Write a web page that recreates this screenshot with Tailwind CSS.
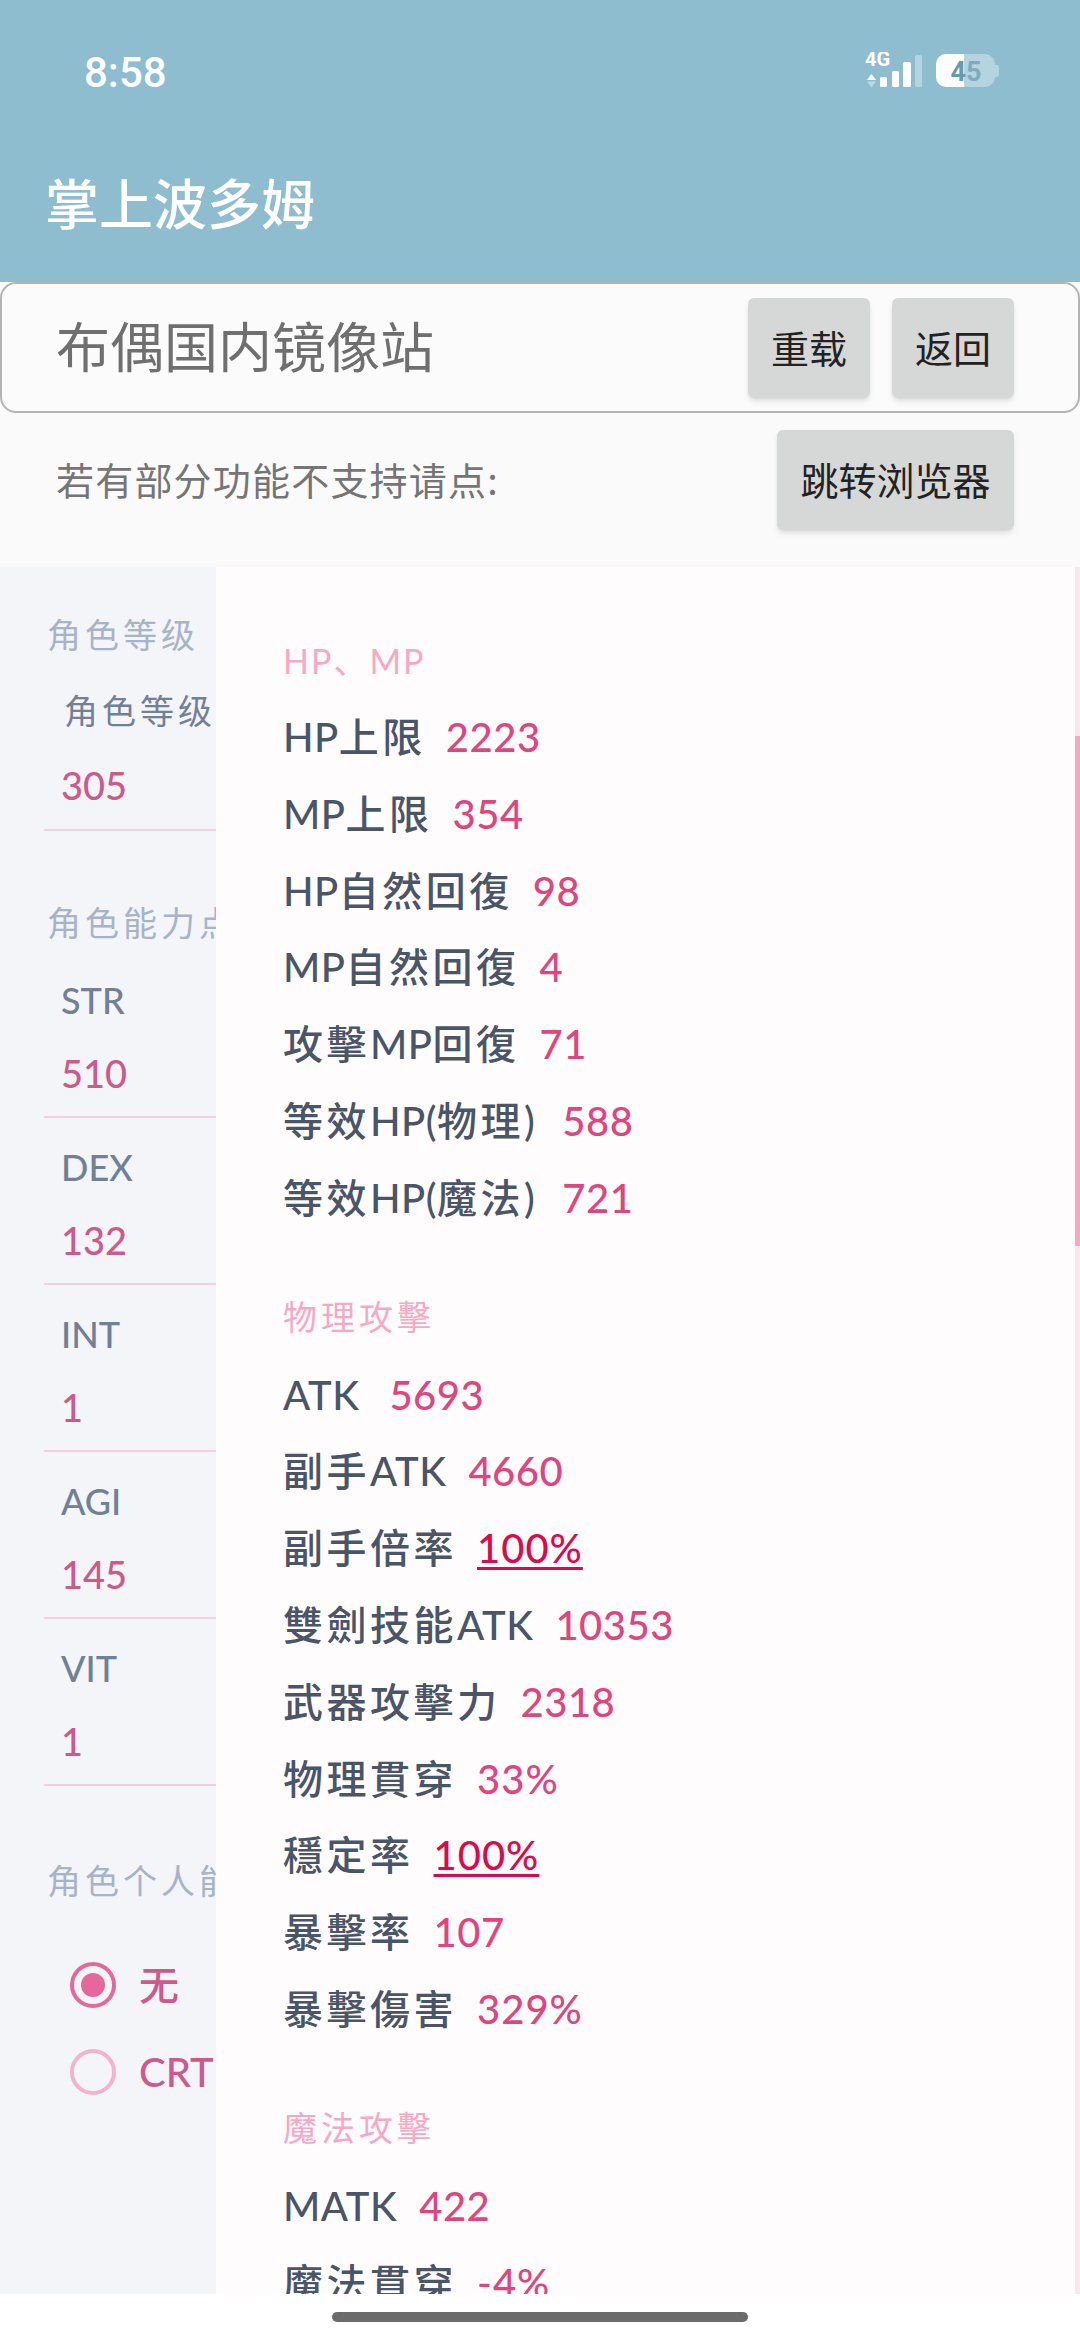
<!DOCTYPE html>
<html lang="zh">
<head>
  <meta charset="UTF-8">
  <meta name="viewport" content="width=device-width, initial-scale=1.0">
  <title>掌上波多姆</title>
  <script src="https://cdn.jsdelivr.net/npm/@tailwindcss/browser@4"></script>
</head>
<body class="w-[1080px] h-[2339px] overflow-hidden bg-white font-['Lato','Noto_Sans_CJK_SC',sans-serif]">
  <!-- App bar -->
  <header class="h-[282px] bg-[#8dbdcf] text-white">
    <div class="h-[144px] flex items-center justify-between pl-[84px] pr-[80px]">
      <span class="font-['Roboto',sans-serif] font-medium text-[42px]">8:58</span>
      <svg width="135" height="40" viewBox="0 0 135 40">
        <text x="0" y="14" font-family="Roboto" font-weight="700" font-size="20" fill="#fff">4G</text>
        <path d="M2 28l4.500-6 4.500 6z" fill="#fff"/>
        <path d="M2 29.500h9l-4.500 6z" fill="#fff" opacity=".4"/>
        <rect x="15" y="25" width="7" height="10" rx="1.500" fill="#fff"/>
        <rect x="27" y="19" width="7" height="16" rx="1.500" fill="#fff"/>
        <rect x="38" y="10" width="8" height="25" rx="1.500" fill="#fff"/>
        <rect x="50" y="3" width="7" height="32" rx="1.500" fill="#fff" opacity=".35"/>
        <rect x="71" y="2" width="59" height="33" rx="10" fill="#fff" opacity=".35"/>
        <path d="M81 2h18v33H81a10 10 0 0 1-10-10V12A10 10 0 0 1 81 2z" fill="#fbfdfe"/>
        <path d="M130 13h2a2 2 0 0 1 2 2v8a2 2 0 0 1-2 2h-2z" fill="#fff" opacity=".35"/>
        <text x="101" y="29" text-anchor="middle" font-family="Roboto" font-weight="700" font-size="27"><tspan fill="#6a98ae">4</tspan><tspan fill="#7fabbe">5</tspan></text>
      </svg>
    </div>
    <h1 class="h-[120px] leading-[116px] pl-[45px] text-[54px] font-medium font-['Noto_Sans_CJK_SC',sans-serif]">掌上波多姆</h1>
  </header>

  <!-- Mirror switcher -->
  <section class="h-[285px] bg-[#fafafa] font-['Noto_Sans_CJK_SC',sans-serif]">
    <div class="h-[131px] flex items-center border-2 border-[#b4b4b4] rounded-2xl pl-[54px] pr-[64px] bg-[#fbfbfb]">
      <span class="flex-1 pb-[7px] text-[54px] text-[#6f6f6f]">布偶国内镜像站</span>
      <button class="w-[122px] h-[100px] pb-[3px] rounded-md bg-[#d6d7d7] shadow-md text-[38px] text-[#222]">重载</button>
      <button class="w-[122px] h-[100px] pb-[3px] ml-[22px] rounded-md bg-[#d6d7d7] shadow-md text-[38px] text-[#222]">返回</button>
    </div>
    <div class="h-[132px] flex items-center pl-[56px] pr-[66px] mt-[1px]">
      <span class="flex-1 pb-[3px] text-[38px] tracking-[1.200px] text-[#757575]">若有部分功能不支持请点:</span>
      <button class="w-[237px] h-[100px] pb-[3px] rounded-md bg-[#d6d7d7] shadow-md text-[38px] text-[#222]">跳转浏览器</button>
    </div>
  </section>

  <main class="h-[1727px] flex overflow-hidden">
    <!-- Character form, mostly covered by the drawer -->
    <div class="w-[216px] shrink-0 bg-[#f3f5f9] pt-[43px] whitespace-nowrap overflow-hidden">
      <h2 class="h-[50px] leading-[50px] pl-[47px] text-[34px] tracking-[4px] font-normal text-[#a6b3c8]">角色等级</h2>
      <div class="ml-[44px] pt-[15px] h-[171px] border-b-2 border-[#f6cfdd]">
        <div class="h-[73px] leading-[72px] pl-[20px] text-[34px] tracking-[4px] text-[#718096]">角色等级</div>
        <div class="h-[74px] leading-[74px] pl-[17px] text-[38px] font-medium text-[#cd5a8a]">305</div>
      </div>

      <h2 class="mt-[67px] mb-[3px] h-[50px] leading-[50px] pl-[47px] text-[34px] tracking-[4px] font-normal text-[#a6b3c8]">角色能力点</h2>
      <div class="ml-[44px] pt-[13px] h-[167px] border-b-2 border-[#f6cfdd]">
        <div class="h-[72px] leading-[72px] pl-[17px] text-[36px] font-medium text-[#718096]">STR</div>
        <div class="h-[74px] leading-[74px] pl-[17px] text-[38px] font-medium text-[#cd5a8a]">510</div>
      </div>
      <div class="ml-[44px] pt-[13px] h-[167px] border-b-2 border-[#f6cfdd]">
        <div class="h-[72px] leading-[72px] pl-[17px] text-[36px] font-medium text-[#718096]">DEX</div>
        <div class="h-[74px] leading-[74px] pl-[17px] text-[38px] font-medium text-[#cd5a8a]">132</div>
      </div>
      <div class="ml-[44px] pt-[13px] h-[167px] border-b-2 border-[#f6cfdd]">
        <div class="h-[72px] leading-[72px] pl-[17px] text-[36px] font-medium text-[#718096]">INT</div>
        <div class="h-[74px] leading-[74px] pl-[17px] text-[38px] font-medium text-[#cd5a8a]">1</div>
      </div>
      <div class="ml-[44px] pt-[13px] h-[167px] border-b-2 border-[#f6cfdd]">
        <div class="h-[72px] leading-[72px] pl-[17px] text-[36px] font-medium text-[#718096]">AGI</div>
        <div class="h-[74px] leading-[74px] pl-[17px] text-[38px] font-medium text-[#cd5a8a]">145</div>
      </div>
      <div class="ml-[44px] pt-[13px] h-[167px] border-b-2 border-[#f6cfdd]">
        <div class="h-[72px] leading-[72px] pl-[17px] text-[36px] font-medium text-[#718096]">VIT</div>
        <div class="h-[74px] leading-[74px] pl-[17px] text-[38px] font-medium text-[#cd5a8a]">1</div>
      </div>

      <h2 class="mt-[70px] h-[50px] leading-[50px] pl-[47px] text-[34px] tracking-[4px] font-normal text-[#a6b3c8]">角色个人能力</h2>
      <div class="mt-[35px] pl-[70px]">
        <div class="h-[87px] flex items-center">
          <span class="w-[46px] h-[46px] rounded-full border-[4px] border-[#e5679b] flex items-center justify-center"><span class="w-[24px] h-[24px] rounded-full bg-[#e5679b]"></span></span>
          <span class="ml-[23px] text-[40px] font-medium text-[#cd5a8a]">无</span>
        </div>
        <div class="h-[87px] flex items-center">
          <span class="w-[46px] h-[46px] rounded-full border-[4px] border-[#f4b3cc]"></span>
          <span class="ml-[23px] text-[40px] font-medium text-[#cd5a8a]">CRT</span>
        </div>
      </div>
    </div>

    <!-- Stats drawer -->
    <div class="relative flex-1 bg-[#fffcfd] pt-[55px] pl-[67px] overflow-hidden whitespace-nowrap text-[40px] tracking-[3.500px] font-medium text-[#4a5568]">
      <h3 class="h-[77px] leading-[77px] text-[34px] tracking-[2px] font-normal text-[#f9a8c4]">HP、MP</h3>
      <div class="h-[76.8px] leading-[76.8px]"><span class="tracking-[0.500px]">HP</span>上限<span class="ml-[20px] tracking-[0.500px] text-[#e0457d]">2223</span></div>
      <div class="h-[76.8px] leading-[76.8px]"><span class="tracking-[0.500px]">MP</span>上限<span class="ml-[20px] tracking-[0.500px] text-[#e0457d]">354</span></div>
      <div class="h-[76.8px] leading-[76.8px]"><span class="tracking-[0.500px]">HP</span>自然回復<span class="ml-[20px] tracking-[0.500px] text-[#e0457d]">98</span></div>
      <div class="h-[76.8px] leading-[76.8px]"><span class="tracking-[0.500px]">MP</span>自然回復<span class="ml-[20px] tracking-[0.500px] text-[#e0457d]">4</span></div>
      <div class="h-[76.8px] leading-[76.8px]">攻擊<span class="tracking-[0.500px]">MP</span>回復<span class="ml-[20px] tracking-[0.500px] text-[#e0457d]">71</span></div>
      <div class="h-[76.8px] leading-[76.8px]">等效<span class="tracking-[0.500px]">HP(</span>物理)<span class="ml-[24px] tracking-[0.500px] text-[#e0457d]">588</span></div>
      <div class="h-[76.8px] leading-[76.8px]">等效<span class="tracking-[0.500px]">HP(</span>魔法)<span class="ml-[24px] tracking-[0.500px] text-[#e0457d]">721</span></div>

      <h3 class="mt-[40px] h-[80px] leading-[80px] text-[34px] tracking-[4px] font-normal text-[#f9a8c4]">物理攻擊</h3>
      <div class="h-[76.8px] leading-[76.8px]"><span class="tracking-[0.500px]">ATK</span><span class="ml-[30px] tracking-[0.500px] text-[#e0457d]">5693</span></div>
      <div class="h-[76.8px] leading-[76.8px]">副手<span class="tracking-[0.500px]">ATK</span><span class="ml-[22px] tracking-[0.500px] text-[#e0457d]">4660</span></div>
      <div class="h-[76.8px] leading-[76.8px]">副手倍率<span class="ml-[20px] tracking-[1px] text-[#db0a4b] underline decoration-[3px] underline-offset-4">100%</span></div>
      <div class="h-[76.8px] leading-[76.8px]">雙劍技能<span class="tracking-[0.500px]">ATK</span><span class="ml-[22px] tracking-[0.500px] text-[#e0457d]">10353</span></div>
      <div class="h-[76.8px] leading-[76.8px]">武器攻擊力<span class="ml-[20px] tracking-[0.500px] text-[#e0457d]">2318</span></div>
      <div class="h-[76.8px] leading-[76.8px]">物理貫穿<span class="ml-[20px] tracking-[1px] text-[#e0457d]">33%</span></div>
      <div class="h-[76.8px] leading-[76.8px]">穩定率<span class="ml-[20px] tracking-[1px] text-[#db0a4b] underline decoration-[3px] underline-offset-4">100%</span></div>
      <div class="h-[76.8px] leading-[76.8px]">暴擊率<span class="ml-[20px] tracking-[0.500px] text-[#e0457d]">107</span></div>
      <div class="h-[76.8px] leading-[76.8px]">暴擊傷害<span class="ml-[20px] tracking-[1px] text-[#e0457d]">329%</span></div>

      <h3 class="mt-[40px] h-[80px] leading-[80px] text-[34px] tracking-[4px] font-normal text-[#f9a8c4]">魔法攻擊</h3>
      <div class="h-[76.8px] leading-[76.8px]"><span class="tracking-[0.500px]">MATK</span><span class="ml-[22px] tracking-[0.500px] text-[#e0457d]">422</span></div>
      <div class="h-[76.8px] leading-[76.8px]">魔法貫穿<span class="ml-[20px] tracking-[1px] text-[#e0457d]">-4%</span></div>

      <!-- Scrollbar -->
      <div class="absolute top-0 right-0 bottom-0 w-[5px] bg-[#fde5ee]"></div>
      <div class="absolute top-[169px] right-0 w-[5px] h-[510px] bg-[#f9a8c4]"></div>
    </div>
  </main>

  <!-- Home indicator -->
  <div class="h-[45px] pt-[18px] bg-white">
    <div class="w-[416px] h-[10px] ml-[332px] rounded-full bg-[#6b6b6b]"></div>
  </div>
</body>
</html>
